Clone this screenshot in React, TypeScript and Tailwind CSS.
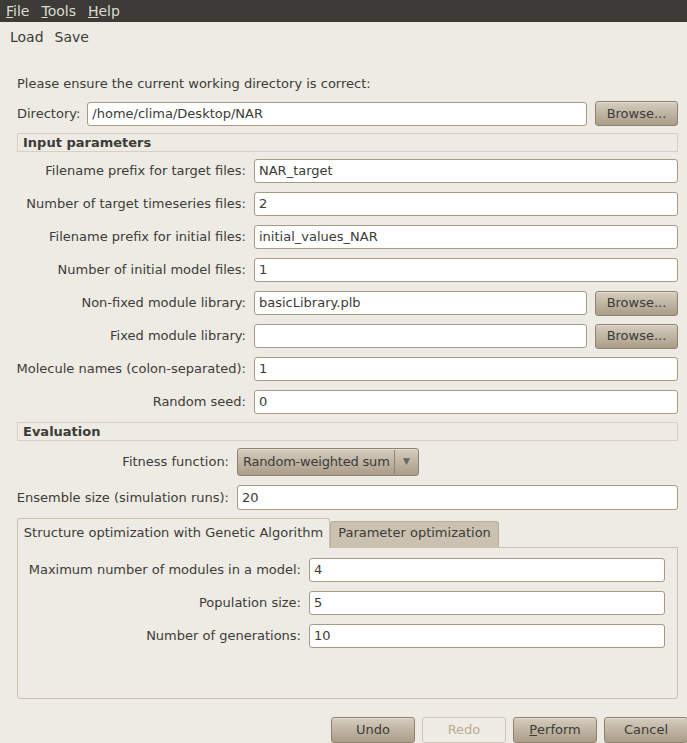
import React from 'react'

const btn =
  'h-[25px] w-[83px] rounded-[3px] border border-[#8f8270] bg-gradient-to-b from-[#d6cdbf] to-[#aa9d89] text-[#3c3b37] flex items-center justify-center shadow-[inset_0_1px_0_rgba(255,255,255,0.35)]'
const input =
  'h-[24px] rounded-[3px] border border-[#a59a84] bg-white px-[4px] flex items-center text-[#3c3b37] whitespace-nowrap'

function Row({ label, value, browse, labelW = 229 }: { label: string; value: string; browse?: boolean; labelW?: number }) {
  return (
    <div className="flex items-center h-[24px]">
      <div className="shrink-0 flex justify-end whitespace-nowrap" style={{ width: labelW }}>{label}</div>
      <div className={`${input} ml-[8px] flex-1`}>{value}</div>
      {browse && <div className={`${btn} ml-[8px]`}>Browse...</div>}
    </div>
  )
}

function Header({ title }: { title: string }) {
  return (
    <div className="h-[19px] border border-[#d8d0c3] flex items-center pl-[5px] font-bold text-[#3c3b37]">
      {title}
    </div>
  )
}

export default function App() {
  const inputs: [string, string, boolean?][] = [
    ['Filename prefix for target files:', 'NAR_target'],
    ['Number of target timeseries files:', '2'],
    ['Filename prefix for initial files:', 'initial_values_NAR'],
    ['Number of initial model files:', '1'],
    ['Non-fixed module library:', 'basicLibrary.plb', true],
    ['Fixed module library:', '', true],
    ['Molecule names (colon-separated):', '1'],
    ['Random seed:', '0'],
  ]
  const ga: [string, string][] = [
    ['Maximum number of modules in a model:', '4'],
    ['Population size:', '5'],
    ['Number of generations:', '10'],
  ]

  return (
    <div className="w-[687px] h-[743px] overflow-hidden bg-[#eeebe5] text-[#3c3b37] text-[13px] flex flex-col" style={{ fontFamily: '"DejaVu Sans", sans-serif' }}>
      {/* menubar */}
      <div className="h-[22px] bg-[#3c3b37] text-[#dfdbd2] flex items-center pl-[6px] text-[14px] shrink-0">
        <span className="mr-[12px]"><u>F</u>ile</span>
        <span className="mr-[12px]"><u>T</u>ools</span>
        <span><u>H</u>elp</span>
      </div>

      {/* toolbar */}
      <div className="h-[30px] flex items-center pl-[10px] gap-[11px] text-[14px] shrink-0">
        <span>Load</span>
        <span>Save</span>
      </div>

      <div className="pl-[17px] pr-[9px] flex flex-col">
        <div className="mt-[24px] h-[16px] leading-[16px]">Please ensure the current working directory is correct:</div>

        <div className="mt-[9px] flex items-center h-[25px]">
          <span>Directory:</span>
          <div className={`${input} ml-[7px] flex-1`}>/home/clima/Desktop/NAR</div>
          <div className={`${btn} ml-[8px]`}>Browse...</div>
        </div>

        <div className="mt-[7px]">
          <Header title="Input parameters" />
        </div>

        <div className="mt-[7px] flex flex-col gap-[9px]">
          {inputs.map(([l, v, b]) => (
            <Row key={l} label={l} value={v} browse={b} />
          ))}
        </div>

        <div className="mt-[8px]">
          <Header title="Evaluation" />
        </div>

        <div className="mt-[7px] flex items-center h-[28px]">
          <div className="w-[212px] flex justify-end whitespace-nowrap">Fitness function:</div>
          <div className="ml-[8px] h-[28px] w-[182px] rounded-[3px] border border-[#8f8270] bg-gradient-to-b from-[#d6cdbf] to-[#aa9d89] flex items-center shadow-[inset_0_1px_0_rgba(255,255,255,0.35)]">
            <span className="pl-[5px] w-[156px] whitespace-nowrap overflow-hidden tracking-[-0.2px]">Random-weighted sum</span>
            <div className="h-[24px] w-px bg-[#8f8270]" />
            <span className="flex-1 text-center text-[9px] text-[#6b6459]">▼</span>
          </div>
        </div>

        <div className="mt-[9px] flex items-center h-[25px]">
          <div className="w-[212px] flex justify-end whitespace-nowrap">Ensemble size (simulation runs):</div>
          <div className={`${input} ml-[8px] flex-1 h-[25px]`}>20</div>
        </div>

        {/* notebook */}
        <div className="mt-[7px] flex flex-col">
          <div className="flex items-end h-[30px]">
            <div className="h-[30px] w-[313px] border border-b-0 border-[#c9c0b0] rounded-t-[3px] bg-[#eeebe5] flex items-center justify-center relative z-10 -mb-px pb-[1px] whitespace-nowrap">
              Structure optimization with Genetic Algorithm
            </div>
            <div className="h-[26px] w-[169px] border border-b-0 border-[#b9ae9c] rounded-t-[3px] bg-[#cbc1b1] flex items-center justify-center whitespace-nowrap pb-[3px]">
              Parameter optimization
            </div>
          </div>
          <div className="h-[152px] border border-[#c9c0b0] rounded-b-[3px] pt-[10px] pr-[12px] flex flex-col gap-[9px]">
            {ga.map(([l, v]) => (
              <Row key={l} label={l} value={v} labelW={283} />
            ))}
          </div>
        </div>
      </div>

      {/* bottom buttons */}
      <div className="mt-[18px] flex justify-end gap-[7px]">
        <div className={`${btn} w-[84px] h-[26px]`}>Undo</div>
        <div className="h-[26px] w-[84px] rounded-[3px] border border-[#cfc5b6] bg-[#efebe5] text-[#b9ab94] flex items-center justify-center">Redo</div>
        <div className={`${btn} w-[84px] h-[26px]`}><u>P</u>erform</div>
        <div className={`${btn} w-[84px] h-[26px] -mr-[1px]`}>Cancel</div>
      </div>
    </div>
  )
}
